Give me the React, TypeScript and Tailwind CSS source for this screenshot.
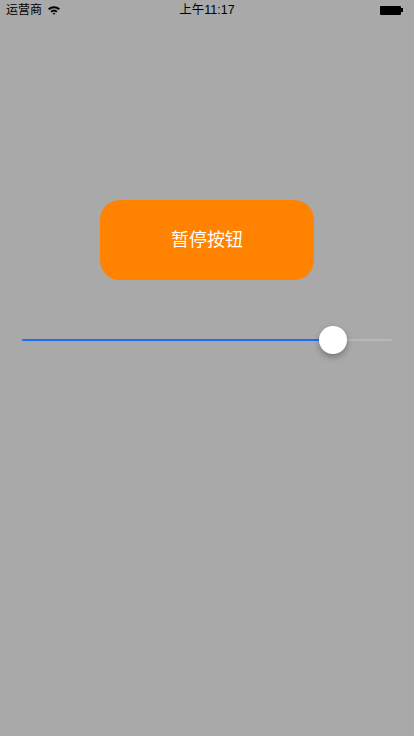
export default function App() {
  const font = { fontFamily: '"Helvetica Neue", "Liberation Sans", "Noto Sans CJK SC", sans-serif' };
  return (
    <div className="flex h-[736px] w-[414px] flex-col bg-[#a9a9a9]" style={font}>
      {/* Status bar */}
      <div className="relative flex h-5 items-center px-[6px] text-[12px] text-black">
        <div className="flex items-center gap-[5px]">
          <span>运营商</span>
          <svg width="14" height="10" viewBox="0 0 14 10">
            <path d="M1 3.5 A9 9 0 0 1 13 3.5 L11.6 5 A7 7 0 0 0 2.4 5 Z" fill="#000" />
            <path d="M3.4 6 A5.5 5.5 0 0 1 10.6 6 L9.2 7.4 A3.5 3.5 0 0 0 4.8 7.4 Z" fill="#000" />
            <path d="M5.6 8.3 A2.2 2.2 0 0 1 8.4 8.3 L7 9.8 Z" fill="#000" />
          </svg>
        </div>
        <span className="absolute left-1/2 -translate-x-1/2 text-[12.5px]">上午11:17</span>
        <div className="ml-auto mr-[5px] flex items-center">
          <div className="h-[9px] w-[21px] rounded-[1px] bg-black" />
          <div className="h-[4px] w-[2px] bg-black" />
        </div>
      </div>

      {/* Button */}
      <div className="mt-[180px] flex justify-center">
        <button className="flex h-[80px] w-[214px] items-center justify-center rounded-[20px] bg-[#ff8200] text-[18px] text-white">
          暂停按钮
        </button>
      </div>

      {/* Slider */}
      <div className="relative mx-[22px] mt-[46px] flex h-[28px] items-center">
        <div className="h-[2px] w-[298px] rounded-l-full bg-[#1a6ff5]" />
        <div className="h-[2px] flex-1 rounded-r-full bg-[#b8b8b8]" />
        <div className="absolute left-[297px] top-0 h-[28px] w-[28px] rounded-full bg-white shadow-[0_3px_6px_rgba(0,0,0,0.3)]" />
      </div>
    </div>
  );
}
